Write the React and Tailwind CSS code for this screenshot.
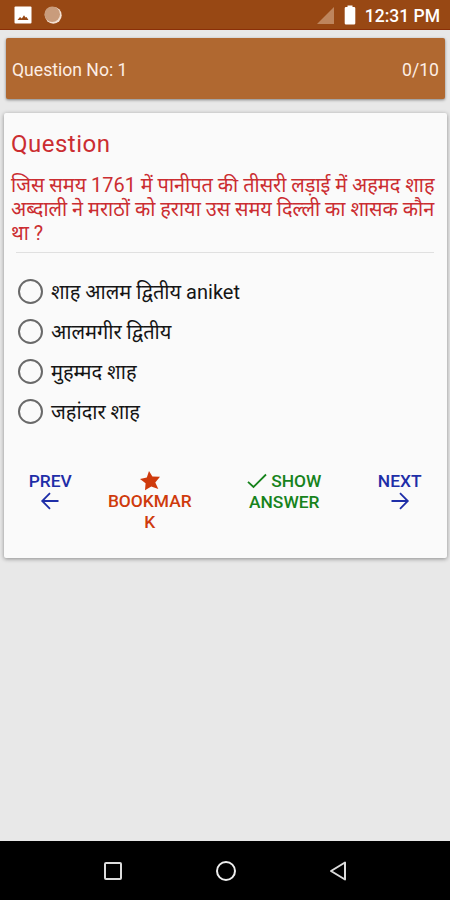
import { useState } from "react";

const QUESTION_LINES = [
  "जिस समय 1761 में पानीपत की तीसरी लड़ाई में अहमद शाह",
  "अब्दाली ने मराठों को हराया उस समय दिल्ली का शासक कौन",
  "था ?",
];

const OPTIONS = [
  "शाह आलम द्वितीय aniket",
  "आलमगीर द्वितीय",
  "मुहम्मद शाह",
  "जहांदार शाह",
];

function StatusBar() {
  return (
    <div className="h-[30px] shrink-0 bg-[#984814] border-b border-[#8a2f08] flex items-center justify-between pl-[14px] pr-[10px]">
      <div className="flex items-center gap-[12px]">
        <svg width="18" height="18" viewBox="0 0 18 18">
          <rect x="0.5" y="0.5" width="17" height="17" rx="1" fill="#fff" />
          <path d="M3.5 14l2.5-3 1.8 1.5 2.2-3.200 1.500 2.200 1-.500 2 3z" fill="#984814" />
        </svg>
        <svg width="18" height="18" viewBox="0 0 18 18">
          <circle cx="9.3" cy="9.3" r="8.4" fill="#f3e0d2" />
          <circle cx="8.2" cy="8.2" r="7.8" fill="#c99c7c" />
        </svg>
      </div>
      <div className="flex items-center">
        <svg width="17" height="17" viewBox="0 0 17 17" className="mr-[10px] mt-[2px]">
          <path d="M17 0v17H0z" fill="#be855d" />
        </svg>
        <svg width="12" height="20" viewBox="0 0 12 20" className="mr-[9px]">
          <path
            d="M3.5 0.5h5V2H10a1.3 1.3 0 0 1 1.3 1.3v15A1.3 1.3 0 0 1 10 19.6H2a1.3 1.3 0 0 1-1.3-1.3v-15A1.3 1.3 0 0 1 2 2h1.5z"
            fill="#fff"
          />
        </svg>
        <span className="text-[17.5px] leading-none font-medium text-white whitespace-nowrap mt-[5px]">
          12:31 PM
        </span>
      </div>
    </div>
  );
}

function ScoreCard() {
  return (
    <div className="h-[61px] shrink-0 mt-[8px] ml-[6px] mr-[5px] px-[6px] pt-[3px] rounded-[2px] bg-[#b06830] shadow-[0_1px_3px_rgba(0,0,0,0.45)] flex items-center justify-between text-[17.6px] text-[#fdeee4]">
      <span>Question No: 1</span>
      <span>0/10</span>
    </div>
  );
}

function OptionList() {
  const [selected, setSelected] = useState(null);

  return (
    <div className="mt-[18px] ml-[14px]">
      {OPTIONS.map((option, index) => (
        <button
          key={option}
          type="button"
          onClick={() => setSelected(index)}
          className="h-[40px] w-full flex items-center gap-[8px] text-[20px] text-[#151515] whitespace-nowrap"
        >
          <span className="w-[25px] h-[25px] shrink-0 rounded-full border-2 border-[#696969] flex items-center justify-center">
            {selected === index && (
              <span className="w-3 h-3 rounded-full bg-[#696969]" />
            )}
          </span>
          <span className="pt-[2px]">{option}</span>
        </button>
      ))}
    </div>
  );
}

function Actions() {
  return (
    <div className="mt-[40px] flex items-start text-[17.4px] leading-[20.5px] font-medium text-center">
      <button type="button" className="w-[93px] flex flex-col items-center text-[#1e2ea8]">
        <span>PREV</span>
        <svg width="24" height="24" viewBox="0 0 24 24" className="-mt-[3px]" fill="none" stroke="currentColor" strokeWidth="1.8">
          <path d="M20.5 12H4.5M12 4.2L4.2 12l7.8 7.8" />
        </svg>
      </button>
      <button type="button" className="w-[107px] flex flex-col items-center text-[#cf3a0c]">
        <svg width="22" height="20" viewBox="0 0 22 20">
          <path
            d="M10 0L13.400 5.600L21 5.700L16.300 11.500L19.300 18L12.300 15.400L6 19.300L6.600 12.300L1 7.900L7.800 6.600Z"
            fill="currentColor"
          />
        </svg>
        <span>BOOKMAR</span>
        <span>K</span>
      </button>
      <button type="button" className="ml-[28px] w-[107px] flex flex-col items-center text-[#17831c]">
        <span className="flex items-center gap-[4px]">
          <svg width="20" height="16" viewBox="0 0 20 16" fill="none" stroke="currentColor" strokeWidth="1.8">
            <path d="M1 8.8l5.5 5.2L19 1.5" />
          </svg>
          SHOW
        </span>
        <span>ANSWER</span>
      </button>
      <button type="button" className="ml-[15px] w-[95px] flex flex-col items-center text-[#1e2ea8]">
        <span>NEXT</span>
        <svg width="24" height="24" viewBox="0 0 24 24" className="-mt-[3px]" fill="none" stroke="currentColor" strokeWidth="1.8">
          <path d="M3.5 12h16M12 4.2l7.8 7.8-7.8 7.8" />
        </svg>
      </button>
    </div>
  );
}

function QuestionCard() {
  return (
    <div className="h-[445px] shrink-0 mt-[14px] ml-[4px] mr-[3px] rounded-[2px] bg-[#fafafa] shadow-[0_1px_4px_rgba(0,0,0,0.4)]">
      <h1 className="pt-[15px] pl-[7px] text-[24px] leading-[32px] tracking-[0.5px] text-[#cb2d31]">
        Question
      </h1>
      <p className="mt-[14px] pl-[7px] text-[19.9px] leading-[24px] text-[#cb2d31] whitespace-nowrap">
        {QUESTION_LINES.map((line) => (
          <span key={line} className="block">
            {line}
          </span>
        ))}
      </p>
      <hr className="mt-[6px] ml-[12px] mr-[13px] border-0 h-px bg-[#e0e0e0]" />
      <OptionList />
      <Actions />
    </div>
  );
}

function NavBar() {
  return (
    <div className="h-[59px] shrink-0 mt-auto bg-black flex items-center justify-between pl-[104px] pr-[103px]">
      <svg width="18" height="18" viewBox="0 0 18 18" fill="none" stroke="#dcdcdc" strokeWidth="2">
        <rect x="1" y="1" width="16" height="16" rx="1" />
      </svg>
      <svg width="22" height="22" viewBox="0 0 22 22" fill="none" stroke="#eee" strokeWidth="2">
        <circle cx="11" cy="11" r="9" />
      </svg>
      <svg width="18" height="20" viewBox="0 0 18 20" fill="none" stroke="#dcdcdc" strokeWidth="2" strokeLinejoin="round">
        <path d="M16 1.5v17L2 10z" />
      </svg>
    </div>
  );
}

export default function App() {
  return (
    <div className="w-[450px] h-[900px] overflow-hidden bg-[#e8e8e8] flex flex-col font-['Roboto','Noto_Sans',sans-serif]">
      <StatusBar />
      <ScoreCard />
      <QuestionCard />
      <NavBar />
    </div>
  );
}
